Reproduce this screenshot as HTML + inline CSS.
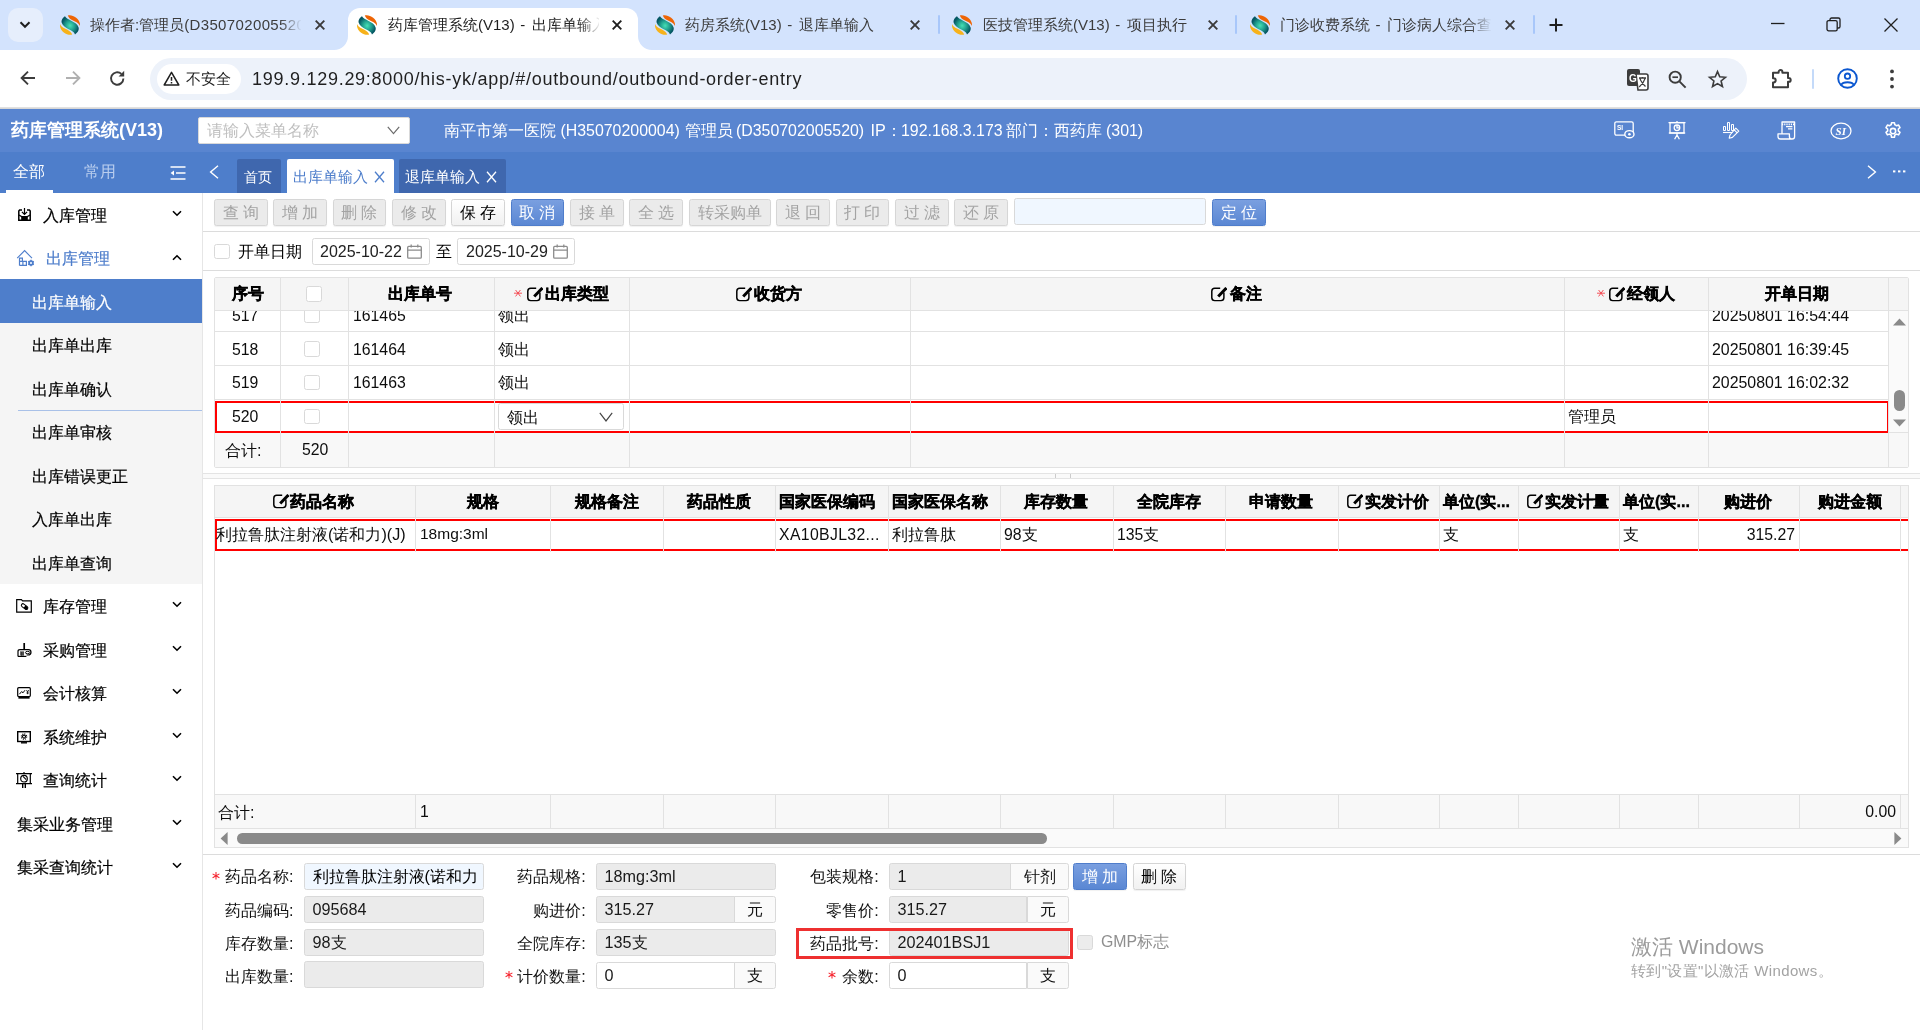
<!DOCTYPE html>
<html lang="zh"><head><meta charset="utf-8"><title>药库管理系统(V13) - 出库单输入</title>
<style>
*{box-sizing:border-box;margin:0;padding:0}
html,body{width:1920px;height:1030px;overflow:hidden;background:#fff}
body{position:relative;background:transparent;will-change:transform;font-family:"Liberation Sans",sans-serif;color:#000;font-size:16.2px}
.a{position:absolute}
.t{position:absolute;white-space:nowrap;overflow:hidden}
svg{position:absolute;overflow:visible}
/* chrome */
#strip{left:0;top:0;width:1920px;height:50px;background:#d3e3fd}
#tool{left:0;top:50px;width:1920px;height:58px;background:#fff;border-radius:9px 9px 0 0}
.tabt{top:14px;height:22px;line-height:22px;font-size:15px;color:#3c3c3c}
.x{stroke:#3a3a3a;stroke-width:1.9;fill:none;stroke-linecap:butt}
.sep{width:2px;height:19px;top:15px;background:#a8c7fa;border-radius:1px}
/* app */
#h1{left:0;top:109px;width:1920px;height:43px;background:#5985d0}
#h2{left:0;top:152px;width:1920px;height:41px;background:#4e7ecb}
.hinfo{top:119px;height:23px;line-height:23px;font-size:16.2px;color:#fff}
.hi{stroke:#fff;fill:none;stroke-width:1.3}
</style></head><body>
<!-- ===== browser tab strip ===== -->
<div class="a" id="strip"></div>
<div class="a" style="left:8px;top:8px;width:35px;height:34px;border-radius:10px;background:#e6eefc"></div>
<svg style="left:19px;top:21px" width="12" height="8" viewBox="0 0 12 8"><path d="M1.5 1.3 L6 5.8 L10.5 1.3" stroke="#1f1f1f" stroke-width="2" fill="none"/></svg>
<!-- active tab -->
<div class="a" style="left:348px;top:8px;width:290px;height:44px;background:#fff;border-radius:12px 12px 0 0"></div>
<svg style="left:334px;top:36px" width="14" height="14" viewBox="0 0 14 14"><path d="M0 14 H14 V0 A14 14 0 0 1 0 14Z" fill="#fff"/></svg>
<svg style="left:638px;top:36px" width="14" height="14" viewBox="0 0 14 14"><path d="M14 14 H0 V0 A14 14 0 0 0 14 14Z" fill="#fff"/></svg>
<div class="a" id="tool"></div>
<!-- favicons -->
<svg width="0" height="0" style="left:0;top:0"><defs><radialGradient id="gg" cx="50%" cy="52%" r="50%"><stop offset="0" stop-color="#45e0b5"/><stop offset="0.55" stop-color="#1f9c8c"/><stop offset="1" stop-color="#055763"/></radialGradient>
<symbol id="fav" viewBox="0 0 20 20">
<path d="M7.8 0.4 C12.5 -1 20.8 3.6 20 11 C18.5 7.5 15 6.5 12.5 5.3 C10.5 4.3 8.6 2.6 7.8 0.4Z" fill="#ee6505"/>
<path d="M5 1.25 C6.5 5 16.8 6.2 18.6 12.4 C19.3 15 17.4 17.8 15 19.4 C14 14.8 3.6 14 1.7 7.8 C1 5.2 2.8 2.6 5 1.25Z" fill="url(#gg)"/>
<path d="M12.2 19.6 C7.5 21 -0.8 16.4 0 9 C1.5 12.5 5 13.5 7.5 14.7 C9.5 15.7 11.4 17.4 12.2 19.6Z" fill="#f7b21a"/>
</symbol></defs></svg>
<svg style="left:60px;top:15px" width="20" height="20"><use href="#fav"/></svg>
<svg style="left:357px;top:15px" width="20" height="20"><use href="#fav"/></svg>
<svg style="left:655px;top:15px" width="20" height="20"><use href="#fav"/></svg>
<svg style="left:952px;top:15px" width="20" height="20"><use href="#fav"/></svg>
<svg style="left:1250px;top:15px" width="20" height="20"><use href="#fav"/></svg>
<div class="t tabt" style="left:90px;width:211px">操作者:管理员<span style="letter-spacing:.36px">(D350702005520)</span></div>
<div class="t tabt" style="left:388px;width:211px;color:#1f1f1f">药库管理系统(V13)<span style="letter-spacing:1.3px"> - </span>出库单输入</div>
<div class="t tabt" style="left:685px;width:213px">药房系统(V13)<span style="letter-spacing:1.3px"> - </span>退库单输入</div>
<div class="t tabt" style="left:983px;width:213px">医技管理系统(V13)<span style="letter-spacing:1.3px"> - </span>项目执行</div>
<div class="t tabt" style="left:1280px;width:211px">门诊收费系统<span style="letter-spacing:1.3px"> - </span>门诊病人综合查询</div>
<!-- fades -->
<div class="a" style="left:280px;top:14px;width:22px;height:22px;background:linear-gradient(90deg,rgba(211,227,253,0),#d3e3fd)"></div>
<div class="a" style="left:579px;top:14px;width:22px;height:22px;background:linear-gradient(90deg,rgba(255,255,255,0),#fff)"></div>
<div class="a" style="left:1470px;top:14px;width:22px;height:22px;background:linear-gradient(90deg,rgba(211,227,253,0),#d3e3fd)"></div>
<!-- close x -->
<svg style="left:315px;top:20px" width="10" height="10"><path class="x" d="M0.7 0.7 L9.3 9.3 M9.3 0.7 L0.7 9.3"/></svg>
<svg style="left:612px;top:20px" width="10" height="10"><path class="x" style="stroke:#1f1f1f" d="M0.7 0.7 L9.3 9.3 M9.3 0.7 L0.7 9.3"/></svg>
<svg style="left:910px;top:20px" width="10" height="10"><path class="x" d="M0.7 0.7 L9.3 9.3 M9.3 0.7 L0.7 9.3"/></svg>
<svg style="left:1208px;top:20px" width="10" height="10"><path class="x" d="M0.7 0.7 L9.3 9.3 M9.3 0.7 L0.7 9.3"/></svg>
<svg style="left:1505px;top:20px" width="10" height="10"><path class="x" d="M0.7 0.7 L9.3 9.3 M9.3 0.7 L0.7 9.3"/></svg>
<div class="a sep" style="left:938px"></div>
<div class="a sep" style="left:1235px"></div>
<div class="a sep" style="left:1533px"></div>
<svg style="left:1549px;top:18px" width="14" height="14"><path d="M7 0.5 V13.5 M0.5 7 H13.5" stroke="#1f1f1f" stroke-width="2" fill="none"/></svg>
<!-- window controls -->
<svg style="left:1771px;top:22px" width="14" height="3"><path d="M0 1.5 H13.5" stroke="#1f1f1f" stroke-width="1.3"/></svg>
<svg style="left:1826px;top:17px" width="15" height="15" viewBox="0 0 15 15"><rect x="1" y="3.6" width="10.2" height="10.2" rx="1.6" stroke="#1f1f1f" stroke-width="1.3" fill="none"/><path d="M4 3.4 V2.6 A1.6 1.6 0 0 1 5.6 1 H12.4 A1.6 1.6 0 0 1 14 2.6 V9.4 A1.6 1.6 0 0 1 12.4 11 H11.4" stroke="#1f1f1f" stroke-width="1.3" fill="none"/></svg>
<svg style="left:1884px;top:18px" width="14" height="14"><path d="M0.5 0.5 L13.5 13.5 M13.5 0.5 L0.5 13.5" stroke="#1f1f1f" stroke-width="1.3"/></svg>
<!-- ===== browser toolbar ===== -->
<svg style="left:20px;top:70px" width="16" height="16" viewBox="0 0 16 16"><path d="M15 8 H2 M8 1.6 L1.6 8 L8 14.4" stroke="#3c3c3c" stroke-width="1.9" fill="none"/></svg>
<svg style="left:65px;top:70px" width="16" height="16" viewBox="0 0 16 16"><path d="M1 8 H14 M8 1.6 L14.4 8 L8 14.4" stroke="#b0b0b0" stroke-width="1.9" fill="none"/></svg>
<svg style="left:109px;top:70px" width="17" height="17" viewBox="0 0 17 17"><path d="M14.4 8.5 A6.2 6.2 0 1 1 12.4 3.9" stroke="#3c3c3c" stroke-width="1.9" fill="none"/><path d="M15.2 0.8 V6.4 H9.6Z" fill="#3c3c3c"/></svg>
<div class="a" style="left:150px;top:58px;width:1597px;height:42px;border-radius:21px;background:#edf2fa"></div>
<div class="a" style="left:157px;top:64px;width:84px;height:30px;border-radius:15px;background:#fff"></div>
<svg style="left:163px;top:71px" width="17" height="15" viewBox="0 0 17 15"><path d="M8.5 1.4 L15.8 14 H1.2Z" stroke="#1f1f1f" stroke-width="1.5" fill="none" stroke-linejoin="round"/><path d="M8.5 6 V9.8 M8.5 11 V12.6" stroke="#1f1f1f" stroke-width="1.5"/></svg>
<div class="t" style="left:186px;top:68px;height:22px;line-height:22px;font-size:15px;color:#1f1f1f">不安全</div>
<div class="t" id="url" style="left:252px;top:66px;height:26px;line-height:26px;font-size:18px;color:#1f1f1f;letter-spacing:0.73px">199.9.129.29:8000/his-yk/app/#/outbound/outbound-order-entry</div>
<!-- translate icon -->
<svg style="left:1627px;top:69px" width="22" height="22" viewBox="0 0 22 22"><rect x="0" y="0" width="13" height="17" rx="2" fill="#3c3c3c"/><path d="M9 5 H19 A2 2 0 0 1 21 7 V19 A2 2 0 0 1 19 21 H11 Z" fill="#fff" stroke="#3c3c3c" stroke-width="1.6"/><text x="2" y="13" font-family="Liberation Sans" font-weight="bold" font-size="10" fill="#fff">G</text><path d="M12 9 H19 M15.5 8 V9.4 M13 9.6 C14 13 16 15 18.5 17.5 M18 9.6 C17 13 15 15.5 12.2 18" stroke="#3c3c3c" stroke-width="1.3" fill="none"/></svg>
<!-- zoom-out -->
<svg style="left:1668px;top:70px" width="19" height="19" viewBox="0 0 19 19"><circle cx="7.2" cy="7.2" r="5.6" stroke="#3c3c3c" stroke-width="1.9" fill="none"/><path d="M11.4 11.4 L17.6 17.6" stroke="#3c3c3c" stroke-width="2"/><path d="M4.4 7.2 H10" stroke="#3c3c3c" stroke-width="1.7"/></svg>
<!-- star -->
<svg style="left:1708px;top:70px" width="19" height="18" viewBox="0 0 21 20"><path d="M10.5 1.8 L13 7.6 L19.3 8.1 L14.5 12.2 L16 18.4 L10.5 15.1 L5 18.4 L6.5 12.2 L1.7 8.1 L8 7.6Z" stroke="#3c3c3c" stroke-width="1.8" fill="none" stroke-linejoin="miter"/></svg>
<!-- extension -->
<svg style="left:1771px;top:68px" width="22" height="21" viewBox="0 0 22 21"><path d="M2 4.8 H7.6 V4 A1.9 1.9 0 0 1 11.4 4 V4.8 H17 V10 H17.8 A1.9 1.9 0 0 1 17.8 13.8 H17 V19.2 H2 V14.4 H2.6 A2.1 2.1 0 0 0 2.6 10.2 H2Z" stroke="#3c3c3c" stroke-width="2" fill="none" stroke-linejoin="round"/></svg>
<div class="a" style="left:1812px;top:69px;width:2px;height:20px;background:#c4daf9;border-radius:1px"></div>
<!-- profile -->
<svg style="left:1837px;top:68px" width="21" height="21" viewBox="0 0 21 21"><circle cx="10.5" cy="10.5" r="9.3" stroke="#0b57d0" stroke-width="1.9" fill="none"/><circle cx="10.5" cy="8.2" r="2.7" stroke="#0b57d0" stroke-width="1.8" fill="none"/><path d="M4.2 16.8 C6 13.4 15 13.4 16.8 16.8" stroke="#0b57d0" stroke-width="1.8" fill="none"/></svg>
<svg style="left:1889px;top:69px" width="6" height="20" viewBox="0 0 6 20"><circle cx="3" cy="2.4" r="1.9" fill="#3c3c3c"/><circle cx="3" cy="10" r="1.9" fill="#3c3c3c"/><circle cx="3" cy="17.6" r="1.9" fill="#3c3c3c"/></svg>
<div class="a" style="left:0;top:107px;width:1920px;height:2px;background:linear-gradient(#e6e6e6,#d2d2d2)"></div>
<!-- ===== app header ===== -->
<div class="a" id="h1"></div><div class="a" id="h2"></div>
<div class="t" style="left:11px;top:118px;height:24px;line-height:24px;font-size:18px;font-weight:bold;color:#fff">药库管理系统(V13)</div>
<div class="a" style="left:198px;top:117px;width:212px;height:27px;background:#fff;border:1px solid #d9d9d9;border-radius:2px"></div>
<div class="t" style="left:207px;top:119px;height:23px;line-height:23px;font-size:16.2px;color:#bfbfbf">请输入菜单名称</div>
<svg style="left:387px;top:126px" width="13" height="9" viewBox="0 0 13 9"><path d="M0.8 0.8 L6.5 7.6 L12.2 0.8" stroke="#6b6b6b" stroke-width="1.2" fill="none"/></svg>
<div class="t hinfo" style="left:443.5px">南平市第一医院</div><div class="t hinfo" style="left:560.5px;font-size:15.9px">(H35070200004)</div><div class="t hinfo" style="left:684.5px">管理员</div><div class="t hinfo" style="left:736px;font-size:15.9px">(D350702005520)</div><div class="t hinfo" style="left:870.5px">IP：</div><div class="t hinfo" style="left:901px;font-size:15.9px">192.168.3.173</div><div class="t hinfo" style="left:1006px">部门：</div><div class="t hinfo" style="left:1053.5px">西药库</div><div class="t hinfo" style="left:1106px;font-size:15.9px">(301)</div>
<!-- header icons -->
<svg style="left:1614px;top:121px" width="21" height="18" viewBox="0 0 21 18"><rect x="0.8" y="0.8" width="18.4" height="13.4" rx="1.6" class="hi"/><text x="3" y="9" font-family="Liberation Sans" font-size="6.5" font-weight="bold" fill="#fff">SI</text><ellipse cx="15.4" cy="13.2" rx="4.6" ry="3.6" fill="#5985d0" stroke="#fff" stroke-width="1.4"/><circle cx="15.4" cy="13.2" r="1.3" fill="#fff"/></svg>
<svg style="left:1668px;top:121px" width="18" height="19" viewBox="0 0 18 19"><path d="M0.5 1.6 H17.5 M9 0 V1.6" class="hi"/><rect x="2" y="1.6" width="14" height="10.4" class="hi"/><circle cx="9" cy="6.8" r="2.8" class="hi"/><path d="M9 4.4 V6.8 H11.4" class="hi" stroke-width="1.2"/><path d="M0.8 12 H17.2" class="hi"/><path d="M9 12 V15 M9 14 L6.6 18.2 M9 14 L11.4 18.2" class="hi"/></svg>
<svg style="left:1722px;top:122px" width="18" height="17" viewBox="0 0 18 17"><path d="M1.5 8.5 V4.5 H3.5 V8.5Z M5.5 8.5 V0.5 H7.5 V8.5Z M9.5 8.5 V2.5 H11.5 V8.5Z" stroke="#fff" stroke-width="1" fill="none"/><path d="M1 10.5 H10.4" stroke="#fff" stroke-width="1.1"/><path d="M13.8 6.2 L16.8 9.2 L10.4 15.4 L7.2 16.2 L8 13Z M12.2 7.8 L15.2 10.8" stroke="#fff" stroke-width="1.15" fill="none" stroke-linejoin="round"/></svg>
<svg style="left:1777px;top:121px" width="19" height="19" viewBox="0 0 19 19"><path d="M5 12.8 V1 H17.6 V15.4 A2.6 2.6 0 0 1 12.4 15.4 V12.8 H1 V15.4 A2.6 2.6 0 0 0 3.6 18 H15" class="hi" stroke-width="1.4" stroke-linejoin="round"/><path d="M5 3.4 H17.6" stroke="#fff" stroke-width="1.6" stroke-dasharray="1.2 1" /><path d="M9 5.6 H15.4 M11 7.8 H15.4" class="hi" stroke-width="1.4"/></svg>
<svg style="left:1830px;top:122px" width="22" height="18" viewBox="0 0 22 18"><ellipse cx="11" cy="9" rx="10" ry="7.8" class="hi" stroke-width="1.6"/><text x="5.6" y="13" font-family="Liberation Serif" font-style="italic" font-weight="bold" font-size="11" fill="#fff">SI</text></svg>
<svg style="left:1882.5px;top:120.5px" width="20" height="20" viewBox="0 0 24 24"><path d="M10.3 2 h3.4 l0.5 2.6 a7.6 7.6 0 0 1 2 1.15 l2.5 -0.85 l1.7 2.95 l-2 1.75 a7.6 7.6 0 0 1 0 2.3 l2 1.75 l-1.7 2.95 l-2.5 -0.85 a7.6 7.6 0 0 1 -2 1.15 l-0.5 2.6 h-3.4 l-0.5 -2.6 a7.6 7.6 0 0 1 -2 -1.15 l-2.5 0.85 l-1.7 -2.95 l2 -1.75 a7.6 7.6 0 0 1 0 -2.3 l-2 -1.75 l1.7 -2.95 l2.5 0.85 a7.6 7.6 0 0 1 2 -1.15 Z" stroke="#fff" stroke-width="1.9" fill="none" stroke-linejoin="round"/><circle cx="12" cy="12" r="3.2" stroke="#fff" stroke-width="1.9" fill="none"/></svg>
<!-- second bar -->
<div class="t" style="left:13px;top:159px;height:24px;line-height:24px;font-size:16.2px;color:#fff">全部</div>
<div class="t" style="left:84px;top:159px;height:24px;line-height:24px;font-size:16.2px;color:#b9cdee">常用</div>
<div class="a" style="left:6px;top:189.5px;width:47px;height:3.5px;background:#fff"></div>
<svg style="left:170px;top:166px" width="16" height="14" viewBox="0 0 16 14"><path d="M0.5 1 H15.5 M6 7 H15.5 M0.5 13 H15.5" stroke="#fff" stroke-width="1.7"/><path d="M4 4.6 V9.4 L0.6 7Z" fill="#fff"/></svg>
<svg style="left:209px;top:165px" width="10" height="14" viewBox="0 0 10 14"><path d="M9 0.8 L1.6 7 L9 13.2" stroke="#fff" stroke-width="1.4" fill="none"/></svg>
<div class="a" style="left:237px;top:159px;width:44px;height:34px;background:#3f67ae;border-radius:2px 2px 0 0"></div>
<div class="t" style="left:244px;top:165px;height:24px;line-height:24px;font-size:14.4px;color:#fff">首页</div>
<div class="a" style="left:287px;top:159px;width:107px;height:34px;background:#fff;border-radius:2px 2px 0 0"></div>
<div class="t" style="left:293px;top:165px;height:24px;line-height:24px;font-size:14.6px;color:#4e7ecb">出库单输入</div>
<svg style="left:374px;top:171px" width="11" height="12" viewBox="0 0 11 12"><path d="M1 0.8 L10 11.2 M10 0.8 L1 11.2" stroke="#4e7ecb" stroke-width="1.3"/></svg>
<div class="a" style="left:399px;top:159px;width:107px;height:34px;background:#3f67ae;border-radius:2px 2px 0 0"></div>
<div class="t" style="left:405px;top:165px;height:24px;line-height:24px;font-size:14.6px;color:#fff">退库单输入</div>
<svg style="left:486px;top:171px" width="11" height="12" viewBox="0 0 11 12"><path d="M1 0.8 L10 11.2 M10 0.8 L1 11.2" stroke="#fff" stroke-width="1.3"/></svg>
<svg style="left:1867px;top:165px" width="10" height="14" viewBox="0 0 10 14"><path d="M1 0.8 L8.4 7 L1 13.2" stroke="#fff" stroke-width="1.4" fill="none"/></svg>
<svg style="left:1893px;top:170px" width="13" height="3" viewBox="0 0 13 3"><rect x="0" y="0.4" width="2.4" height="2" fill="#fff"/><rect x="5" y="0.4" width="2.4" height="2" fill="#fff"/><rect x="10" y="0.4" width="2.4" height="2" fill="#fff"/></svg>
<!-- ===== sidebar ===== -->
<div class="a" style="left:0;top:193px;width:202px;height:837px;background:#fff"></div>
<div class="a" style="left:202px;top:193px;width:1px;height:837px;background:#e6e6e6"></div>
<div class="a" style="left:0;top:279px;width:202px;height:305px;background:#f5f5f5"></div>
<div class="a" style="left:0;top:279px;width:202px;height:44px;background:#4e7ecb"></div>
<div class="a" style="left:18px;top:410px;width:184px;height:1px;background:#a9c1e8"></div>
<style>
.m1{-webkit-text-stroke:0.2px currentColor;left:43.3px;height:24px;line-height:24px;font-size:16.2px;color:#000}
.m2{-webkit-text-stroke:0.2px currentColor;left:32px;height:24px;line-height:24px;font-size:16px;color:#000}
.chev{left:172px}
</style>
<div class="t m1" style="top:203px">入库管理</div>
<div class="t m1" style="top:246px;left:46px;color:#4e7ecb">出库管理</div>
<div class="t m2" style="top:291.3px;color:#fff">出库单输入</div>
<div class="t m2" style="top:334.3px">出库单出库</div>
<div class="t m2" style="top:378.3px">出库单确认</div>
<div class="t m2" style="top:421.3px">出库单审核</div>
<div class="t m2" style="top:465.3px">出库错误更正</div>
<div class="t m2" style="top:508.3px">入库单出库</div>
<div class="t m2" style="top:552.3px">出库单查询</div>
<div class="t m1" style="top:594px">库存管理</div>
<div class="t m1" style="top:638px">采购管理</div>
<div class="t m1" style="top:681px">会计核算</div>
<div class="t m1" style="top:725px">系统维护</div>
<div class="t m1" style="top:768px">查询统计</div>
<div class="t m1" style="top:812px;left:17px">集采业务管理</div>
<div class="t m1" style="top:855px;left:17px">集采查询统计</div>
<svg width="0" height="0" style="left:0;top:0"><defs><symbol id="cd" viewBox="0 0 10 7"><path d="M1 1.2 L5 5.2 L9 1.2" stroke="#000" stroke-width="1.6" fill="none"/></symbol></defs></svg>
<svg class="chev" style="top:210px" width="10" height="7"><use href="#cd"/></svg>
<svg class="chev" style="top:254px" width="10" height="7" viewBox="0 0 10 7"><path d="M1 5.8 L5 1.8 L9 5.8" stroke="#000" stroke-width="1.6" fill="none"/></svg>
<svg class="chev" style="top:601px" width="10" height="7"><use href="#cd"/></svg>
<svg class="chev" style="top:645px" width="10" height="7"><use href="#cd"/></svg>
<svg class="chev" style="top:688px" width="10" height="7"><use href="#cd"/></svg>
<svg class="chev" style="top:732px" width="10" height="7"><use href="#cd"/></svg>
<svg class="chev" style="top:775px" width="10" height="7"><use href="#cd"/></svg>
<svg class="chev" style="top:819px" width="10" height="7"><use href="#cd"/></svg>
<svg class="chev" style="top:862px" width="10" height="7"><use href="#cd"/></svg>
<!-- sidebar icons -->
<svg style="left:18px;top:208px" width="13" height="13" viewBox="0 0 13 13"><path d="M4 2 H1.6 L0.8 3 V12.2 H12.2 V3 L11.4 2 H9" stroke="#000" stroke-width="1.5" fill="none"/><path d="M6.5 0 V6 M3.9 3.8 L6.5 6.4 L9.1 3.8" stroke="#000" stroke-width="1.2" fill="none"/><path d="M1 7 L3.6 8.6 H9.4 L12 7" stroke="#000" stroke-width="1.2" fill="none"/><rect x="3.2" y="8.6" width="6.6" height="3.6" fill="#000"/></svg>
<svg style="left:17px;top:250px" width="17" height="16" viewBox="0 0 17 16"><g stroke="#4e7ecb" fill="none"><path d="M0.2 8.2 L7.6 0.6 L15 8.2" stroke-width="1.1"/><path d="M2.5 15.4 V8.2 H5.4 V11.4 M2.5 11.4 H9.4 V15.4 H2.5 M5.9 11.4 V15.4" stroke-width="1.2"/><circle cx="14" cy="13" r="1.9" stroke-width="1.7"/><path d="M14 9.8 V16.2 M11.2 11.4 L16.8 14.6 M11.2 14.6 L16.8 11.4" stroke-width="1.3"/></g><circle cx="14" cy="13" r="1" fill="#fff"/></svg>
<svg style="left:16px;top:599px" width="16" height="14" viewBox="0 0 16 14"><path d="M0.7 13.2 V0.7 H5.4 L6.6 1.9 H15.3 V13.2Z" stroke="#000" stroke-width="1.2" fill="none"/><g transform="rotate(38 8.6 7.6)"><rect x="4.9" y="6" width="7.4" height="3.2" rx="1.6" stroke="#000" stroke-width="1" fill="#fff"/><path d="M8.6 6 H10.7 A1.6 1.6 0 0 1 10.7 9.2 H8.6Z" fill="#000"/></g></svg>
<svg style="left:17px;top:643px" width="15" height="14" viewBox="0 0 15 14"><path d="M7.2 0 V6.4" stroke="#000" stroke-width="1.7"/><path d="M1 13.4 V8.4 Q1 6.6 3 6.6 H11.4 Q14 6.6 14 9.2 Q14 12 11 12 H9.6" stroke="#000" stroke-width="1.2" fill="none"/><path d="M1 13.4 H9.4" stroke="#000" stroke-width="1.2"/><ellipse cx="10.6" cy="9.6" rx="2.2" ry="1.2" stroke="#000" stroke-width="1" fill="none"/><path d="M3 9 H7 M3 11 H7 M4.2 9 V13 M6 9 V13" stroke="#000" stroke-width="0.9"/></svg>
<svg style="left:17px;top:687px" width="14" height="12" viewBox="0 0 14 12"><rect x="0.7" y="0.7" width="12.6" height="8.8" rx="1" stroke="#000" stroke-width="1.2" fill="none"/><path d="M1.4 10.8 H12.6" stroke="#000" stroke-width="1.7"/><path d="M2.4 7.2 L4.6 4.6 L6 5.8 L8 3.2" stroke="#000" stroke-width="1" fill="none"/><path d="M9.4 3 L10.6 4.6 L11.8 3 M10.6 4.6 V7.2 M9.6 5 H11.6 M9.6 6.2 H11.6" stroke="#000" stroke-width="0.8" fill="none"/></svg>
<svg style="left:17px;top:731px" width="14" height="13" viewBox="0 0 14 13"><rect x="0.7" y="0.7" width="12.6" height="9.8" stroke="#000" stroke-width="1.4" fill="none"/><path d="M4 11.8 H10" stroke="#000" stroke-width="1.4"/><circle cx="7" cy="5.6" r="1.5" stroke="#000" stroke-width="1.1" fill="none"/><circle cx="7" cy="5.6" r="2.7" stroke="#000" stroke-width="1.1" fill="none" stroke-dasharray="1.06 1.06"/></svg>
<svg style="left:16px;top:772px" width="16" height="16" viewBox="0 0 16 16"><path d="M0 1.7 H16 M8 0 V1.7 M1.7 1.7 V11.7 M14.3 1.7 V11.7 M0 11.7 H16" stroke="#000" stroke-width="1.2" fill="none"/><circle cx="8" cy="6.7" r="3.3" stroke="#000" stroke-width="1.2" fill="none"/><path d="M7 4.4 L10.2 7.6" stroke="#000" stroke-width="1.1"/><path d="M6.7 11.7 V16 M9.3 11.7 V16" stroke="#000" stroke-width="1.4"/></svg>
<!-- ===== toolbar ===== -->
<style>
.btn{position:absolute;top:199px;height:27px;width:54px;border:1px solid #d6d6d6;border-radius:2.5px;background:#ebebeb;color:#a3a3a3;font-size:16.2px;line-height:24px;text-align:center;white-space:nowrap;overflow:hidden;letter-spacing:4.2px;padding-left:4px;box-shadow:0 1px 1px rgba(0,0,0,.06)}
.btn.on{background:linear-gradient(#fff,#f1f1f1);color:#000;border-color:#d4d4d4}
.btn.pri{background:linear-gradient(#7a9fe0,#5a87d3);color:#fff;border-color:#4f7dcb}
</style>
<div class="btn" style="left:214px">查询</div>
<div class="btn" style="left:273.3px">增加</div>
<div class="btn" style="left:333.2px;width:52.6px">删除</div>
<div class="btn" style="left:392.2px">修改</div>
<div class="btn on" style="left:451.3px">保存</div>
<div class="btn pri" style="left:510.9px;width:53px">取消</div>
<div class="btn" style="left:570px">接单</div>
<div class="btn" style="left:629.2px">全选</div>
<div class="btn" style="left:689.2px;width:81.4px;letter-spacing:0;padding-left:0">转采购单</div>
<div class="btn" style="left:776.3px">退回</div>
<div class="btn" style="left:836.1px;width:52.8px">打印</div>
<div class="btn" style="left:895.2px">过滤</div>
<div class="btn" style="left:954.3px">还原</div>
<div class="a" style="left:1014px;top:198px;width:192px;height:27px;background:#f0f7ff;border:1px solid #d9d9d9;border-radius:2.5px"></div>
<div class="btn pri" style="left:1212px">定位</div>
<div class="a" style="left:203px;top:231px;width:1717px;height:1px;background:#dcdcdc"></div>
<!-- filter row -->
<div class="a" style="left:214px;top:243.5px;width:15.5px;height:15.5px;border:1px solid #d9d9d9;border-radius:2.5px;background:#fff"></div>
<div class="t" style="left:238px;top:239px;height:24px;line-height:24px;font-size:16.2px">开单日期</div>
<div class="a" style="left:312px;top:238px;width:118px;height:26.5px;border:1px solid #d9d9d9;border-radius:2.5px;background:#fff"></div>
<div class="t" style="left:320px;top:240px;height:24px;line-height:24px;font-size:16px;color:#222">2025-10-22</div>
<div class="t" style="left:436px;top:239px;height:24px;line-height:24px;font-size:16.2px">至</div>
<div class="a" style="left:457px;top:238px;width:118px;height:26.5px;border:1px solid #d9d9d9;border-radius:2.5px;background:#fff"></div>
<div class="t" style="left:466px;top:240px;height:24px;line-height:24px;font-size:16px;color:#222">2025-10-29</div>
<svg width="0" height="0" style="left:0;top:0"><defs><symbol id="cal" viewBox="0 0 15 15"><rect x="0.7" y="2.4" width="13.6" height="11.8" rx="1" stroke="#8c8c8c" stroke-width="1.3" fill="none"/><path d="M0.7 6.2 H14.3 M4.2 0.6 V3.6 M10.8 0.6 V3.6" stroke="#8c8c8c" stroke-width="1.3" fill="none"/></symbol></defs></svg>
<svg style="left:407px;top:243.5px" width="15" height="15"><use href="#cal"/></svg>
<svg style="left:553px;top:243.5px" width="15" height="15"><use href="#cal"/></svg>
<div class="a" style="left:203px;top:270px;width:1717px;height:1px;background:#dcdcdc"></div>
<!-- ===== grid 1 ===== -->
<style>
.g1h{top:278px;height:33px;background:#f5f5f5}
.vl{position:absolute;width:1px;background:#e2e2e2}
.hl{position:absolute;height:1px;background:#e2e2e2}
.hd{position:absolute;white-space:nowrap;font-weight:bold;-webkit-text-stroke:0.35px #000;font-size:16.2px;height:24px;line-height:24px;color:#000}
.c{position:absolute;white-space:nowrap;font-size:16.2px;height:24px;line-height:24px;color:#0d0d0d;overflow:hidden}
.n{font-size:15.8px;line-height:25.6px}
.cb{position:absolute;width:16px;height:15.5px;border:1px solid #d9d9d9;border-radius:2.5px;background:#fff}
</style>
<div class="a" style="left:214px;top:277px;width:1695px;height:191px;border:1px solid #e2e2e2;background:#fff;border-radius:2px"></div>
<div class="a" style="left:215px;top:433px;width:1693px;height:34px;background:#f8f8f8"></div>
<!-- rows text (517 clipped) -->
<div class="a" style="left:215px;top:297px;width:1674px;height:34px;overflow:hidden">
<div class="c n" style="left:17px;top:6px">517</div><div class="cb" style="left:89px;top:10px"></div><div class="c n" style="left:138px;top:6px">161465</div><div class="c" style="left:283px;top:6px">领出</div><div class="c n" style="left:1497px;top:6px;font-size:15.9px">20250801 16:54:44</div></div>
<div class="a g1h" style="left:215px;width:1693px"></div>
<div class="hl" style="left:215px;top:310px;width:1693px"></div>
<div class="hl" style="left:215px;top:331px;width:1674px"></div>
<div class="hl" style="left:215px;top:365px;width:1674px"></div>
<div class="hl" style="left:215px;top:399px;width:1674px"></div>
<div class="hl" style="left:215px;top:432px;width:1693px"></div>
<div class="a" style="left:215px;top:401px;width:1673.5px;height:32px;border:2px solid #ff0000"></div>
<div class="vl" style="left:280px;top:278px;height:189px"></div>
<div class="vl" style="left:348px;top:278px;height:189px"></div>
<div class="vl" style="left:494px;top:278px;height:189px"></div>
<div class="vl" style="left:629px;top:278px;height:189px"></div>
<div class="vl" style="left:910px;top:278px;height:189px"></div>
<div class="vl" style="left:1564px;top:278px;height:189px"></div>
<div class="vl" style="left:1708px;top:278px;height:189px"></div>
<div class="vl" style="left:1888px;top:278px;height:189px"></div>
<!-- header cells -->
<div class="hd" style="left:232px;top:281px">序号</div>
<div class="cb" style="left:306px;top:286px"></div>
<div class="hd" style="left:388px;top:281px">出库单号</div>
<div class="hd" style="left:545px;top:281px">出库类型</div>
<div class="hd" style="left:754px;top:281px">收货方</div>
<div class="hd" style="left:1230px;top:281px">备注</div>
<div class="hd" style="left:1627px;top:281px">经领人</div>
<div class="hd" style="left:1765px;top:281px">开单日期</div>
<svg style="left:513.5px;top:289.6px" width="8" height="6.4" viewBox="0 0 8 6.4"><path d="M0 3.2 H8 M1.6 0 L6.4 6.4 M6.4 0 L1.6 6.4" stroke="#f4474f" stroke-width="0.95" fill="none"/></svg>
<svg style="left:1596.6px;top:289.6px" width="8" height="6.4" viewBox="0 0 8 6.4"><path d="M0 3.2 H8 M1.6 0 L6.4 6.4 M6.4 0 L1.6 6.4" stroke="#f4474f" stroke-width="0.95" fill="none"/></svg>
<svg width="0" height="0" style="left:0;top:0"><defs><symbol id="ed" viewBox="0 0 16 14.5"><path d="M9.2 1.3 H3.7 A3 3 0 0 0 0.8 4.2 V10.8 A3 3 0 0 0 3.7 13.7 H10 A3 3 0 0 0 12.9 10.8 V5.6" stroke="#000" stroke-width="1.5" fill="none"/><path d="M15.4 0.9 L7.2 9.6" stroke="#000" stroke-width="2.9" fill="none"/></symbol></defs></svg>
<svg style="left:526.5px;top:286.5px" width="16" height="14.5"><use href="#ed"/></svg>
<svg style="left:735.5px;top:286.5px" width="16" height="14.5"><use href="#ed"/></svg>
<svg style="left:1210.5px;top:286.5px" width="16" height="14.5"><use href="#ed"/></svg>
<svg style="left:1608.5px;top:286.5px" width="16" height="14.5"><use href="#ed"/></svg>
<!-- rows -->
<div class="c n" style="left:232px;top:337px">518</div><div class="cb" style="left:304px;top:341px"></div><div class="c n" style="left:353px;top:337px">161464</div><div class="c" style="left:498px;top:337px">领出</div><div class="c n" style="left:1712px;top:337px;font-size:15.9px">20250801 16:39:45</div>
<div class="c n" style="left:232px;top:370px">519</div><div class="cb" style="left:304px;top:374.5px"></div><div class="c n" style="left:353px;top:370px">161463</div><div class="c" style="left:498px;top:370px">领出</div><div class="c n" style="left:1712px;top:370px;font-size:15.9px">20250801 16:02:32</div>
<div class="c n" style="left:232px;top:404px">520</div><div class="cb" style="left:304px;top:408.5px"></div>
<div class="a" style="left:498px;top:403px;width:126px;height:27px;border:1px solid #d9d9d9;border-radius:2.5px;background:#fff"></div>
<div class="c" style="left:507px;top:405px">领出</div>
<svg style="left:599px;top:411.5px" width="14" height="10" viewBox="0 0 14 9" preserveAspectRatio="none"><path d="M0.8 0.8 L7 8 L13.2 0.8" stroke="#444" stroke-width="1.2" fill="none"/></svg>
<div class="c" style="left:1568px;top:404px">管理员</div>

<div class="c" style="left:225px;top:438px">合计:</div><div class="c n" style="left:302px;top:438px;line-height:24.4px">520</div>
<!-- vertical scrollbar -->
<div class="a" style="left:1889px;top:311px;width:19px;height:121px;background:#fafafa"></div>
<svg style="left:1893px;top:318px" width="13" height="8" viewBox="0 0 13 8"><path d="M0 7.6 L6.5 0.6 L13 7.6Z" fill="#8a8a8a"/></svg>
<div class="a" style="left:1894px;top:390px;width:11px;height:21px;border-radius:5.5px;background:#8a8a8a"></div>
<svg style="left:1893px;top:419px" width="13" height="8" viewBox="0 0 13 8"><path d="M0 0.4 L6.5 7.4 L13 0.4Z" fill="#8a8a8a"/></svg>
<!-- splitter -->
<div class="a" style="left:203px;top:473px;width:1717px;height:6px;border-top:1px solid #e4e4e4;border-bottom:1px solid #e4e4e4;background:#fafafa"></div>
<div class="a" style="left:1055px;top:474px;width:16px;height:4px;border-left:1px solid #ccc;border-right:1px solid #ccc"></div>
<!-- ===== grid 2 ===== -->
<div class="a" style="left:214px;top:485px;width:1695px;height:363px;border:1px solid #e2e2e2;background:#fff"></div>
<div class="a" style="left:215px;top:486px;width:1693px;height:31px;background:#f5f5f5"></div>
<div class="a" style="left:215px;top:795px;width:1693px;height:33px;background:#f8f8f8"></div>
<div class="a" style="left:215px;top:828px;width:1693px;height:19px;background:#fafafa"></div>
<div class="hl" style="left:215px;top:517px;width:1693px"></div>
<div class="hl" style="left:215px;top:794px;width:1693px"></div>
<div class="hl" style="left:215px;top:828px;width:1693px"></div>
<div class="a" style="left:215px;top:519px;width:1693px;height:32px;border:2px solid #ff0000;border-right:0"></div>
<style>.v2a{top:486px;height:66px}.v2b{top:795px;height:33px}</style>
<div class="vl v2a" style="left:415px"></div><div class="vl v2b" style="left:415px"></div>
<div class="vl v2a" style="left:550px"></div><div class="vl v2b" style="left:550px"></div>
<div class="vl v2a" style="left:663px"></div><div class="vl v2b" style="left:663px"></div>
<div class="vl v2a" style="left:775px"></div><div class="vl v2b" style="left:775px"></div>
<div class="vl v2a" style="left:888px"></div><div class="vl v2b" style="left:888px"></div>
<div class="vl v2a" style="left:1000px"></div><div class="vl v2b" style="left:1000px"></div>
<div class="vl v2a" style="left:1113px"></div><div class="vl v2b" style="left:1113px"></div>
<div class="vl v2a" style="left:1225px"></div><div class="vl v2b" style="left:1225px"></div>
<div class="vl v2a" style="left:1338px"></div><div class="vl v2b" style="left:1338px"></div>
<div class="vl v2a" style="left:1439px"></div><div class="vl v2b" style="left:1439px"></div>
<div class="vl v2a" style="left:1518px"></div><div class="vl v2b" style="left:1518px"></div>
<div class="vl v2a" style="left:1619px"></div><div class="vl v2b" style="left:1619px"></div>
<div class="vl v2a" style="left:1698px"></div><div class="vl v2b" style="left:1698px"></div>
<div class="vl v2a" style="left:1799px"></div><div class="vl v2b" style="left:1799px"></div>
<div class="vl v2a" style="left:1900px"></div><div class="vl v2b" style="left:1900px"></div>
<!-- header -->
<svg style="left:272.5px;top:493.8px" width="16" height="14.5"><use href="#ed"/></svg>
<div class="hd" style="left:290px;top:488.5px">药品名称</div>
<div class="hd" style="left:467px;top:488.5px">规格</div>
<div class="hd" style="left:574.5px;top:488.5px">规格备注</div>
<div class="hd" style="left:687px;top:488.5px">药品性质</div>
<div class="hd" style="left:779px;top:488.5px">国家医保编码</div>
<div class="hd" style="left:892px;top:488.5px">国家医保名称</div>
<div class="hd" style="left:1024px;top:488.5px">库存数量</div>
<div class="hd" style="left:1137px;top:488.5px">全院库存</div>
<div class="hd" style="left:1249px;top:488.5px">申请数量</div>
<svg style="left:1346.5px;top:493.8px" width="16" height="14.5"><use href="#ed"/></svg>
<div class="hd" style="left:1365px;top:488.5px">实发计价</div>
<div class="hd" style="left:1443px;top:488.5px">单位(实...</div>
<svg style="left:1526.5px;top:493.8px" width="16" height="14.5"><use href="#ed"/></svg>
<div class="hd" style="left:1545px;top:488.5px">实发计量</div>
<div class="hd" style="left:1623px;top:488.5px">单位(实...</div>
<div class="hd" style="left:1724px;top:488.5px">购进价</div>
<div class="hd" style="left:1818px;top:488.5px">购进金额</div>
<!-- row -->
<div class="c" style="left:216px;top:522px">利拉鲁肽注射液(诺和力)(J)</div>
<div class="c" style="left:420px;top:522px;font-size:15.5px">18mg:3ml</div>
<div class="c n" style="left:779px;top:522px;letter-spacing:0.35px">XA10BJL32...</div>
<div class="c" style="left:892px;top:522px">利拉鲁肽</div>
<div class="c" style="left:1004px;top:522px"><span class="n">98</span>支</div>
<div class="c" style="left:1117px;top:522px"><span class="n">135</span>支</div>
<div class="c" style="left:1443px;top:522px">支</div>
<div class="c" style="left:1623px;top:522px">支</div>
<div class="c n" style="left:1700px;top:522px;width:95px;text-align:right">315.27</div>

<!-- footer -->
<div class="c" style="left:218px;top:800px">合计:</div>
<div class="c n" style="left:420px;top:800px;line-height:24px">1</div>
<div class="c n" style="left:1801px;top:800px;width:95px;text-align:right;line-height:24px">0.00</div>
<!-- h scrollbar -->
<svg style="left:220px;top:832px" width="8" height="13" viewBox="0 0 8 13"><path d="M7.6 0 L0.6 6.5 L7.6 13Z" fill="#8a8a8a"/></svg>
<div class="a" style="left:236.5px;top:833px;width:810px;height:10.5px;border-radius:5.25px;background:#8a8a8a"></div>
<svg style="left:1894px;top:832px" width="8" height="13" viewBox="0 0 8 13"><path d="M0.4 0 L7.4 6.5 L0.4 13Z" fill="#8a8a8a"/></svg>
<div class="a" style="left:203px;top:854px;width:1717px;height:1px;background:#dcdcdc"></div>
<!-- ===== form ===== -->
<style>
.lb{position:absolute;white-space:nowrap;font-size:16.2px;height:24px;line-height:24px;text-align:right;width:90px;color:#111}
.in{position:absolute;height:26.8px;border:1px solid #d9d9d9;border-radius:2.5px;background:#ebebeb;font-size:16.2px;line-height:24.5px;padding-left:7.6px;white-space:nowrap;overflow:hidden;color:#1a1a1a}
.in.w{background:#fff}
.un{position:absolute;height:26.8px;border:1px solid #d9d9d9;border-radius:0 2.5px 2.5px 0;background:#fafafa;font-size:16.2px;line-height:24.5px;text-align:center;white-space:nowrap;overflow:hidden;color:#111}
.rq{position:absolute;font-size:17px;height:24px;line-height:24px;color:#f5222d}
</style>
<svg style="left:211.5px;top:871.8px" width="8" height="7.6" viewBox="0 0 8 7.6"><path d="M4 0 V7.6 M0.6 1.9 L7.4 5.7 M7.4 1.9 L0.6 5.7" stroke="#f5222d" stroke-width="1.05" fill="none"/></svg>
<div class="lb" style="left:203.6px;top:864.3px">药品名称:</div>
<div class="in" style="left:304px;top:863.1px;width:180px;background:#f0f7ff;color:#000">利拉鲁肽注射液(诺和力</div>
<div class="lb" style="left:203.6px;top:897.5px">药品编码:</div>
<div class="in" style="left:304px;top:896.3px;width:180px">095684</div>
<div class="lb" style="left:203.6px;top:930.5px">库存数量:</div>
<div class="in" style="left:304px;top:929.3px;width:180px">98支</div>
<div class="lb" style="left:203.6px;top:963.5px">出库数量:</div>
<div class="in" style="left:304px;top:961.1px;width:180px"></div>
<div class="lb" style="left:495.8px;top:864.3px">药品规格:</div>
<div class="in" style="left:596px;top:863.1px;width:180px">18mg:3ml</div>
<div class="lb" style="left:495.8px;top:897.5px">购进价:</div>
<div class="in" style="left:596px;top:896.3px;width:139px;border-radius:2.5px 0 0 2.5px">315.27</div>
<div class="un" style="left:734px;top:896.3px;width:42px">元</div>
<div class="lb" style="left:495.8px;top:930.5px">全院库存:</div>
<div class="in" style="left:596px;top:929.3px;width:180px">135支</div>
<svg style="left:504.6px;top:971.0px" width="8" height="7.6" viewBox="0 0 8 7.6"><path d="M4 0 V7.6 M0.6 1.9 L7.4 5.7 M7.4 1.9 L0.6 5.7" stroke="#f5222d" stroke-width="1.05" fill="none"/></svg>
<div class="lb" style="left:495.8px;top:963.5px">计价数量:</div>
<div class="in w" style="left:596px;top:962.3px;width:139px;border-radius:2.5px 0 0 2.5px">0</div>
<div class="un" style="left:734px;top:962.3px;width:42px">支</div>
<div class="lb" style="left:788.8px;top:864.3px">包装规格:</div>
<div class="in" style="left:889px;top:863.1px;width:122px;border-radius:2.5px 0 0 2.5px">1</div>
<div class="un" style="left:1010px;top:863.1px;width:59px">针剂</div>
<div class="lb" style="left:788.8px;top:897.5px">零售价:</div>
<div class="in" style="left:889px;top:896.3px;width:138px;border-radius:2.5px 0 0 2.5px">315.27</div>
<div class="un" style="left:1026.5px;top:896.3px;width:42.5px">元</div>
<div class="lb" style="left:788.8px;top:930.5px">药品批号:</div>
<div class="in" style="left:889px;top:929.3px;width:180px">202401BSJ1</div>
<svg style="left:828.4px;top:971.0px" width="8" height="7.6" viewBox="0 0 8 7.6"><path d="M4 0 V7.6 M0.6 1.9 L7.4 5.7 M7.4 1.9 L0.6 5.7" stroke="#f5222d" stroke-width="1.05" fill="none"/></svg>
<div class="lb" style="left:788.8px;top:963.5px">余数:</div>
<div class="in w" style="left:889px;top:962.3px;width:138px;border-radius:2.5px 0 0 2.5px">0</div>
<div class="un" style="left:1026.5px;top:962.3px;width:42.5px">支</div>
<div class="a" style="left:796px;top:928px;width:277.4px;height:31px;border:3px solid #ee3030"></div>
<div class="btn pri" style="left:1073px;top:863px">增加</div>
<div class="btn on" style="left:1133px;top:863px;width:53px">删除</div>
<div class="cb" style="left:1077px;top:934.6px;background:#ececec"></div>
<div class="t" style="left:1101px;top:930px;height:24px;line-height:24px;font-size:15.9px;color:#8f8f8f">GMP标志</div>
<div class="t" style="left:1631px;top:933px;height:28px;line-height:28px;font-size:21px;color:#9b9b9b">激活 Windows</div>
<div class="t" style="left:1631px;top:960.6px;height:20px;line-height:20px;font-size:15px;letter-spacing:0.35px;color:#a3a3a3">转到"设置"以激活 Windows。</div>
</body></html>
